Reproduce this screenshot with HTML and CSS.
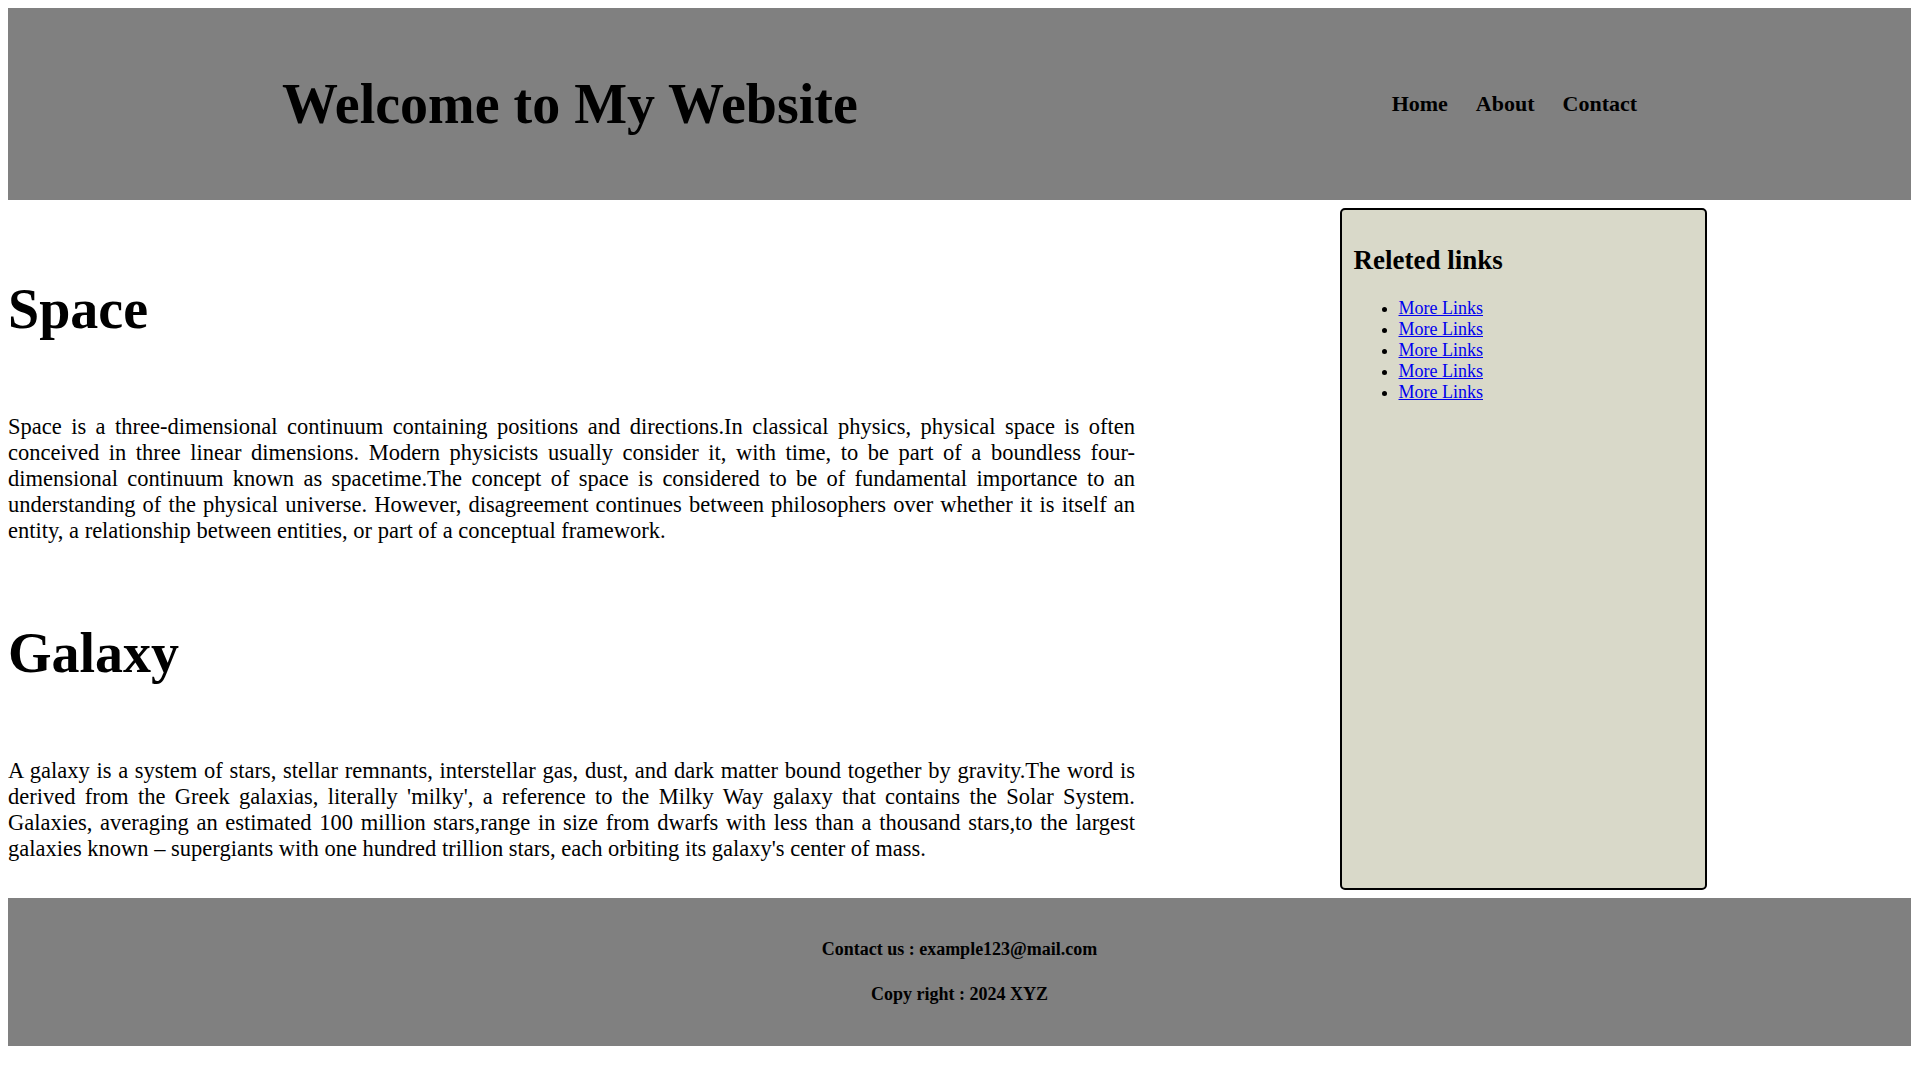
FILE: index.html
```html
<!DOCTYPE html>
<html lang="en">
<head>
<meta charset="utf-8">
<title>My Website</title>
<link rel="stylesheet" href="styles.css">
</head>
<body>
<header class="site-header">
  <h1 class="site-title">Welcome to My Website</h1>
  <nav class="site-nav">
    <a class="nav-link" href="#">Home</a>
    <a class="nav-link" href="#">About</a>
    <a class="nav-link" href="#">Contact</a>
  </nav>
</header>
<div class="layout">
  <main class="content">
    <section class="article">
      <h1 class="article-title">Space</h1>
      <p class="article-text">Space is a three-dimensional continuum containing positions and directions.In classical physics, physical space is often conceived in three linear dimensions. Modern physicists usually consider it, with time, to be part of a boundless four-dimensional continuum known as spacetime.The concept of space is considered to be of fundamental importance to an understanding of the physical universe. However, disagreement continues between philosophers over whether it is itself an entity, a relationship between entities, or part of a conceptual framework.</p>
    </section>
    <section class="article">
      <h1 class="article-title">Galaxy</h1>
      <p class="article-text">A galaxy is a system of stars, stellar remnants, interstellar gas, dust, and dark matter bound together by gravity.The word is derived from the Greek galaxias, literally 'milky', a reference to the Milky Way galaxy that contains the Solar System. Galaxies, averaging an estimated 100 million stars,range in size from dwarfs with less than a thousand stars,to the largest galaxies known – supergiants with one hundred trillion stars, each orbiting its galaxy's center of mass.</p>
    </section>
  </main>
  <aside class="sidebar">
    <h2 class="sidebar-title">Releted links</h2>
    <ul class="link-list">
      <li><a href="#">More Links</a></li>
      <li><a href="#">More Links</a></li>
      <li><a href="#">More Links</a></li>
      <li><a href="#">More Links</a></li>
      <li><a href="#">More Links</a></li>
    </ul>
  </aside>
</div>
<footer class="site-footer">
  <h4 class="footer-line">Contact us : example123@mail.com</h4>
  <h4 class="footer-line">Copy right : 2024 XYZ</h4>
</footer>
</body>
</html>
```
FILE: styles.css
```css
body {
  margin: 8px;
  font-family: "Liberation Serif", "Times New Roman", serif;
  font-size: 18px;
  color: #000;
  background: #fff;
}

.site-header {
  height: 192px;
  padding-left: 14px;
  background: #808080;
  display: flex;
  align-items: center;
  justify-content: space-around;
}

.site-title {
  margin: 0;
  font-size: 56px;
  font-weight: bold;
}

.site-nav {
  display: flex;
}

.nav-link {
  padding: 0 14px;
  font-size: 22px;
  font-weight: bold;
  color: #000;
  text-decoration: none;
}

.layout {
  display: flex;
  align-items: stretch;
}

.content {
  width: 1127px;
  flex: 0 0 1127px;
}

.article-title {
  font-size: 56px;
  margin: 77px 0 73px;
}

.article-text {
  font-size: 22.5px;
  text-align: justify;
  margin: 0 0 36px;
}

.sidebar {
  width: 367px;
  box-sizing: border-box;
  margin: 8px auto;
  padding: 13px 12px 12px;
  border: 2px solid #000;
  border-radius: 5px;
  background: #d9d9c9;
}

.sidebar-title {
  font-size: 27px;
  margin: 22px 0;
}

.link-list {
  margin: 18px 0;
  padding-left: 45px;
}

.link-list a {
  color: #0000ee;
}

.site-footer {
  background: #808080;
  padding: 17px 0;
  text-align: center;
}

.footer-line {
  font-size: 18px;
  margin: 24px 0;
}
```
